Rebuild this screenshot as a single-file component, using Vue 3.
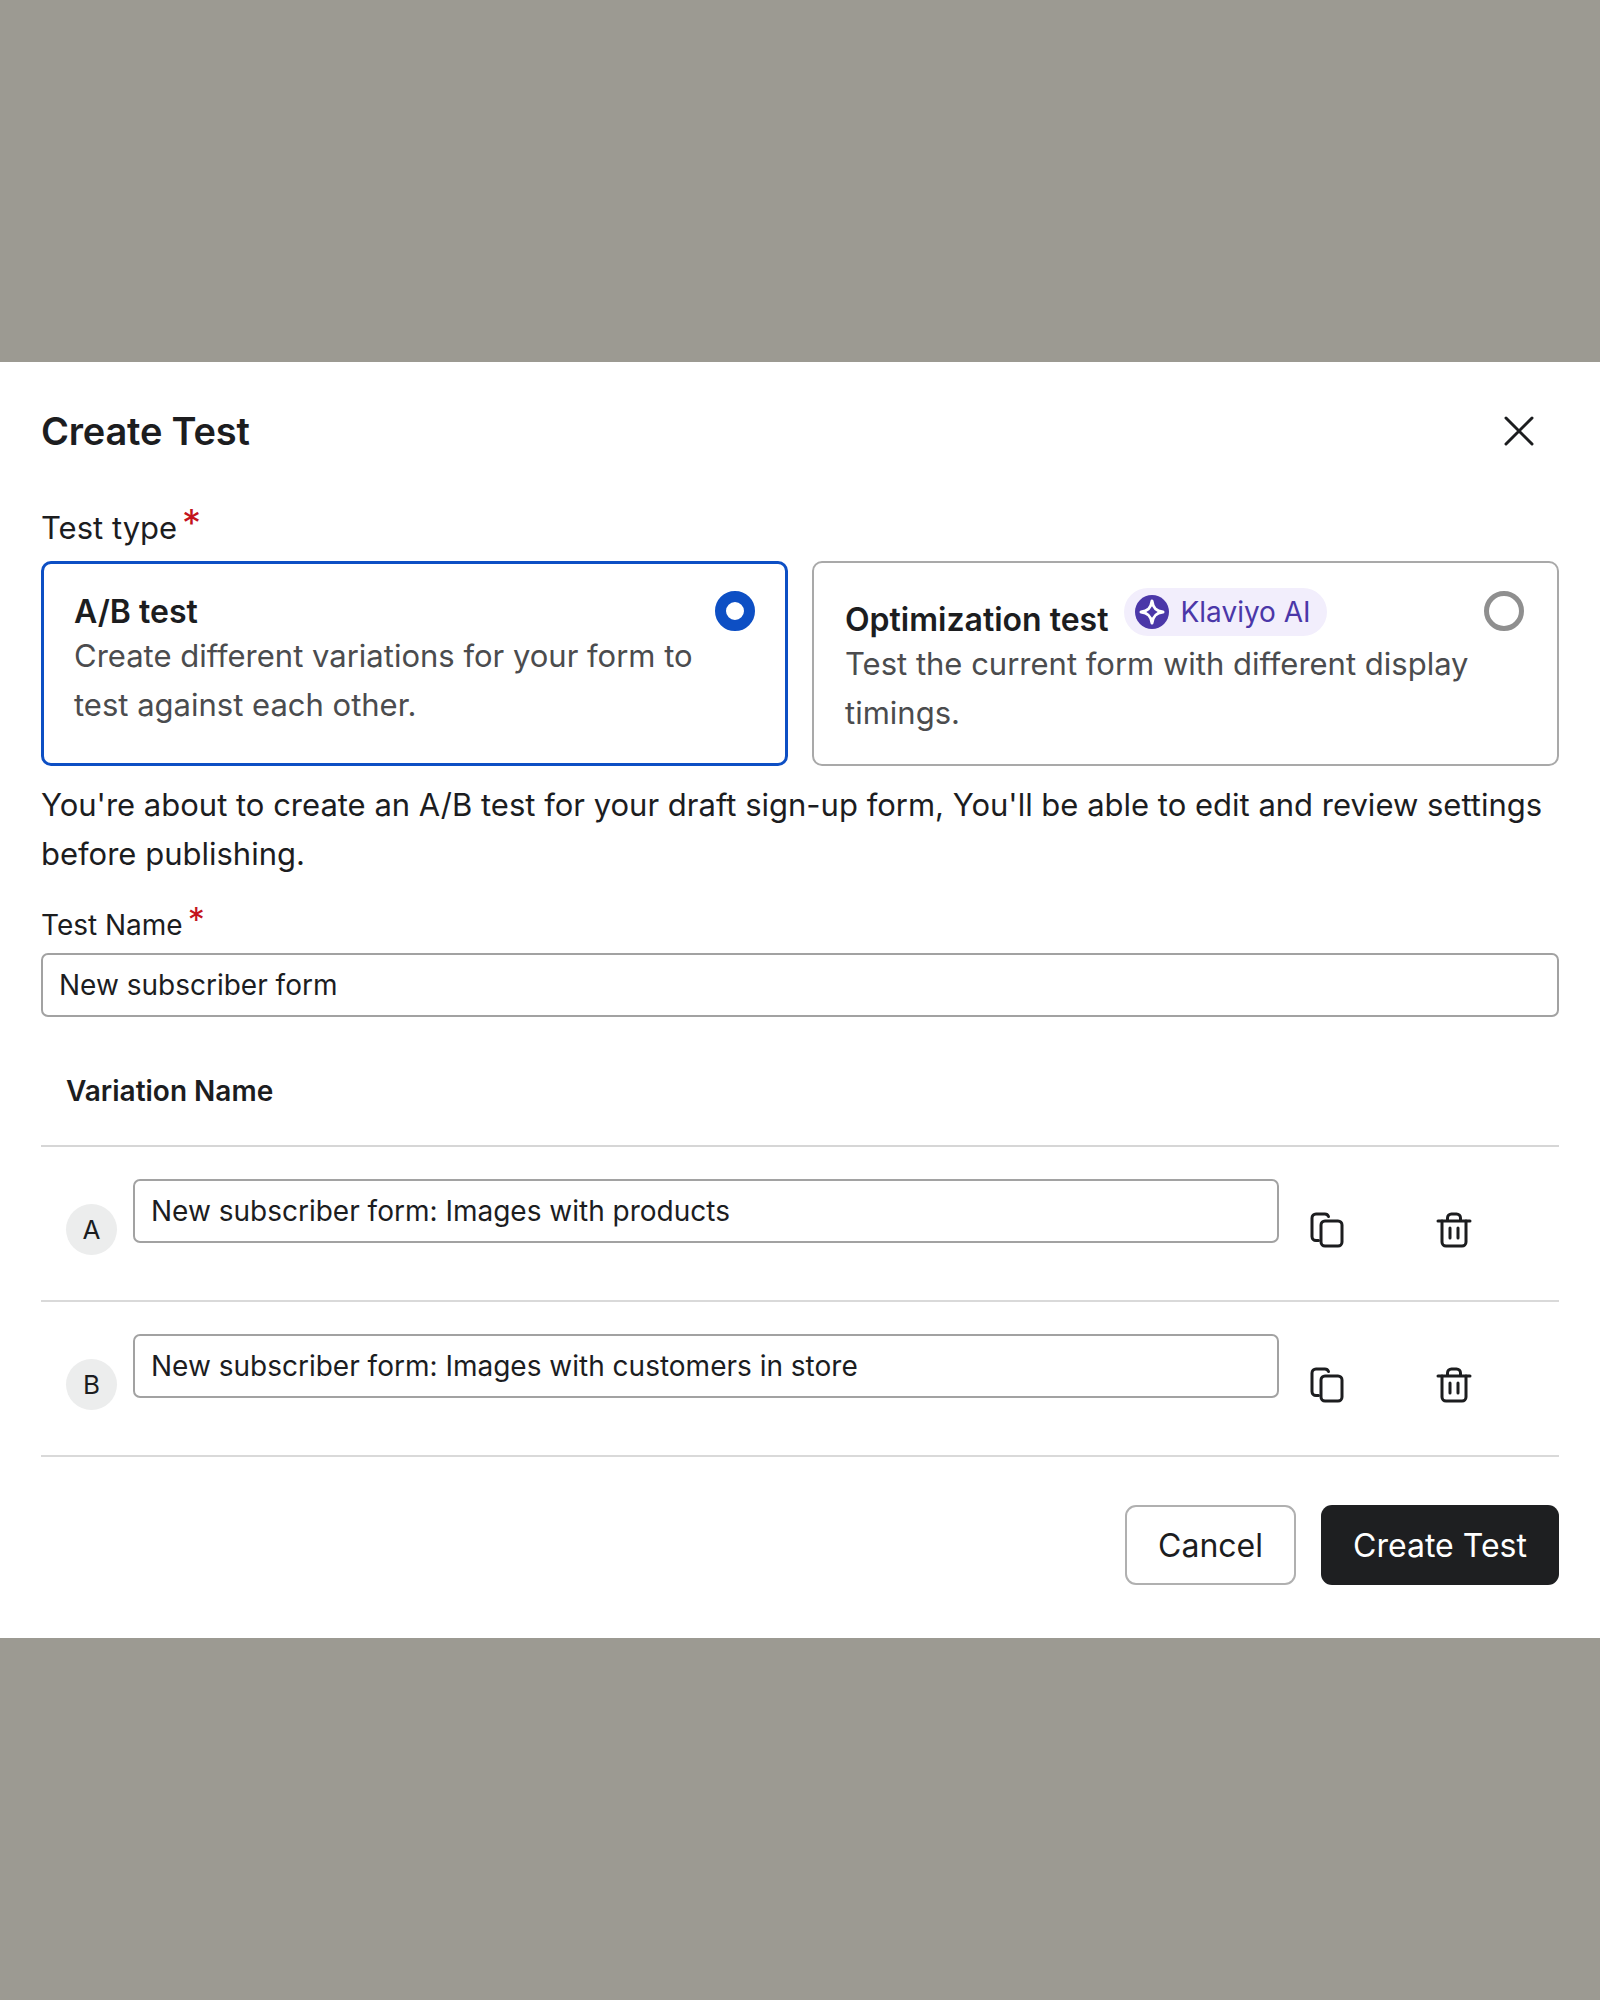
<script setup>
const rows = [
  { key: 'A', name: 'New subscriber form: Images with products' },
  { key: 'B', name: 'New subscriber form: Images with customers in store' },
]
</script>

<template>
  <div class="page">
    <div class="scrim"></div>
    <section class="modal">
      <header class="head">
        <h1>Create Test</h1>
        <svg class="close" viewBox="0 0 30 30" width="30" height="30" fill="none" stroke="#1c1d1f" stroke-width="3" stroke-linecap="round">
          <path d="M2 2 L28 28 M28 2 L2 28" />
        </svg>
      </header>

      <div class="label type-label">Test type<span class="req">*</span></div>

      <div class="cards">
        <div class="card selected">
          <div class="card-title">A/B test</div>
          <div class="card-desc">Create different variations for your form to test against each other.</div>
          <span class="radio on"></span>
        </div>
        <div class="card plain">
          <div class="title-row">
            <div class="card-title">Optimization test</div>
            <span class="badge">
              <svg viewBox="0 0 34 34" width="34" height="34">
                <circle cx="17" cy="17" r="17" fill="#4b37a8" />
                <path d="M17 6 C18 13 21 16 28 17 C21 18 18 21 17 28 C16 21 13 18 6 17 C13 16 16 13 17 6 Z" fill="none" stroke="#fff" stroke-width="3" stroke-linejoin="round" />
              </svg>
              Klaviyo AI
            </span>
          </div>
          <div class="card-desc">Test the current form with different display timings.</div>
          <span class="radio"></span>
        </div>
      </div>

      <p class="intro">You're about to create an A/B test for your draft sign-up form, You'll be able to edit and review settings before publishing.</p>

      <div class="label name-label">Test Name<span class="req">*</span></div>
      <div class="field">New subscriber form</div>

      <div class="table-head">Variation Name</div>

      <div v-for="r in rows" :key="r.key" class="row">
        <span class="avatar">{{ r.key }}</span>
        <div class="field row-field">{{ r.name }}</div>
        <span class="icon-cell">
          <svg viewBox="0 0 36 36" width="36" height="36" fill="none" stroke="#1c1d1f" stroke-width="3" stroke-linejoin="round" stroke-linecap="round">
            <path d="M9.5 28.5 H7 A4 4 0 0 1 3 24.5 V6 A4 4 0 0 1 7 2 H15.5 A4 4 0 0 1 19.5 4.5" />
            <rect x="12" y="9" width="21" height="25" rx="4" />
          </svg>
        </span>
        <span class="icon-cell">
          <svg viewBox="0 0 36 36" width="36" height="36" fill="none" stroke="#1c1d1f" stroke-width="3" stroke-linejoin="round" stroke-linecap="round">
            <path d="M2 9 H34" />
            <path d="M11.5 8.5 V6 A4 4 0 0 1 15.5 2 H20.5 A4 4 0 0 1 24.5 6 V8.5" />
            <path d="M6 9 V30 A4 4 0 0 0 10 34 H26 A4 4 0 0 0 30 30 V9" />
            <path d="M14 16 V26 M22 16 V26" />
          </svg>
        </span>
      </div>

      <footer class="actions">
        <button class="btn ghost">Cancel</button>
        <button class="btn solid">Create Test</button>
      </footer>
    </section>
    <div class="scrim bottom"></div>
  </div>
</template>

<style>
html, body { margin: 0; background: #9c9a92; }
</style>

<style scoped>
.page { width: 1600px; height: 2000px; background: #9c9a92; font-family: Inter, "Liberation Sans", sans-serif; color: #1c1d1f; }
.scrim { height: 362px; }
.scrim.bottom { height: 362px; }
.modal { height: 1276px; box-sizing: border-box; background: #fff; padding: 0 41px; }

.head { height: 138px; display: flex; align-items: center; justify-content: space-between; padding-right: 25px; }
h1 { margin: 0; font-size: 38px; font-weight: 600; letter-spacing: -0.2px; }
.close { display: block; }

.label { display: flex; font-size: 31px; line-height: 40px; }
.type-label { margin-top: 8px; height: 53px; }
.req { color: #c4141d; font-size: 38px; line-height: 30px; margin-left: 5px; }

.cards { display: flex; gap: 24px; }
.card { position: relative; flex: 1; height: 205px; box-sizing: border-box; border-radius: 10px; background: #fff; }
.card.selected { border: 3px solid #0d4fc4; padding: 28px 30px 0; }
.card.plain { border: 2px solid #a9a9a9; padding: 37px 31px 0; }
.card-title { font-size: 32px; line-height: 40px; font-weight: 600; }
.card-desc { font-size: 31px; line-height: 48.5px; color: #4b4c4e; width: 640px; }
.title-row { display: flex; gap: 16px; align-items: flex-start; }

.badge { display: inline-flex; align-items: center; gap: 11px; height: 48px; margin-top: -12px; padding: 0 16px 0 11px; background: #f2eefc; border-radius: 24px; color: #4b37a8; font-size: 28px; }
.badge svg { display: block; }

.radio { position: absolute; top: 28px; right: 30px; width: 40px; height: 40px; box-sizing: border-box; border-radius: 50%; border: 5px solid #8f8f8f; background: #fff; }
.card.selected .radio { top: 27px; right: 30px; }
.card.plain .radio { top: 28px; right: 33px; }
.radio.on { border: 11px solid #0d4fc4; }

.intro { margin: 15px 0 0; font-size: 31px; line-height: 48.5px; color: #1c1d1f; }

.name-label { font-size: 28px; line-height: 36px; margin-top: 29px; height: 46px; align-items: flex-start; }
.name-label .req { font-size: 34px; line-height: 26px; }

.field { height: 64px; box-sizing: border-box; border: 2px solid #a2a2a2; border-radius: 7px; padding: 0 16px; display: flex; align-items: center; font-size: 28px; color: #1c1d1f; }

.table-head { height: 130px; box-sizing: border-box; padding: 56px 25px 0; font-size: 28px; line-height: 36px; font-weight: 600; border-bottom: 2px solid #d6d6d6; }

.row { height: 155px; box-sizing: border-box; display: grid; grid-template-columns: 51px 1146px 127px 127px; column-gap: 0; align-items: center; padding: 0 0 0 25px; border-bottom: 2px solid #d9d9d9; position: relative; }
.avatar { width: 51px; height: 51px; border-radius: 50%; background: #eceded; display: flex; align-items: center; justify-content: center; font-size: 26px; margin-top: 12px; }
.row-field { align-self: start; margin: 32px 0 0 16px; width: 1146px; }
.icon-cell { display: flex; align-items: center; justify-content: center; margin-top: 12px; }
.icon-cell svg { display: block; }

.actions { display: flex; justify-content: flex-end; gap: 25px; margin-top: 48px; }
.btn { height: 80px; font-family: inherit; font-size: 32px; border-radius: 11px; box-sizing: border-box; }
.btn.ghost { width: 171px; background: #fff; border: 2px solid #b0b0b0; color: #1c1d1f; }
.btn.solid { width: 238px; background: #1e1f21; border: 0; color: #fff; }
</style>
